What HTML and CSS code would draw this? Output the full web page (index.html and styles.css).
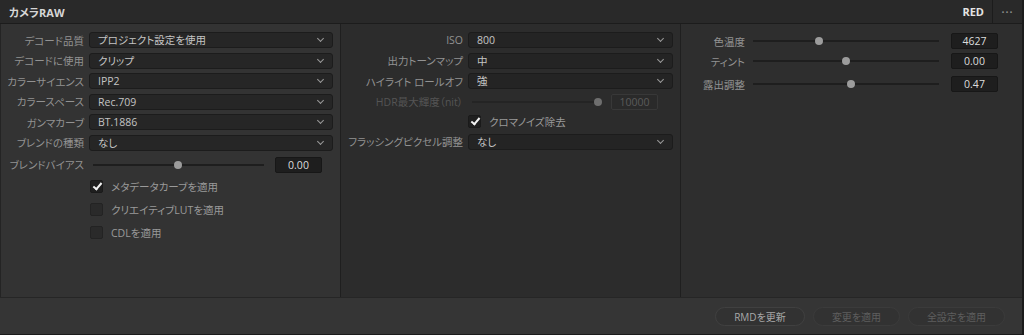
FILE: index.html
```html
<!DOCTYPE html>
<html lang="ja">

<head>
  <meta charset="UTF-8" />
  <meta name="viewport" content="width=device-width, initial-scale=1.0" />
  <title>カメラRAW</title>
  <link rel="stylesheet" href="styles.css">
</head>

<body>
  <div id="raw-panel">
    <div class="panel-header">
      <span class="panel-title">カメラRAW</span>
      <span class="panel-format">RED</span>
      <span class="panel-menu">&bull;&bull;&bull;</span>
    </div>

    <div class="panel-body">
      <!-- 左: デコード設定 -->
      <div class="col col-left">
        <div class="field">
          <label>デコード品質</label>
          <div class="select">プロジェクト設定を使用</div>
        </div>
        <div class="field">
          <label>デコードに使用</label>
          <div class="select">クリップ</div>
        </div>
        <div class="field">
          <label>カラーサイエンス</label>
          <div class="select">IPP2</div>
        </div>
        <div class="field">
          <label>カラースペース</label>
          <div class="select">Rec.709</div>
        </div>
        <div class="field">
          <label>ガンマカーブ</label>
          <div class="select">BT.1886</div>
        </div>
        <div class="field">
          <label>ブレンドの種類</label>
          <div class="select">なし</div>
        </div>
        <div class="field slider-field blend-bias">
          <label>ブレンドバイアス</label>
          <div class="slider-wrap">
            <div class="slider"><span class="thumb" style="left: 49.5%"></span></div>
            <div class="value-box">0.00</div>
          </div>
        </div>
        <div class="check-list">
          <div class="check"><span class="box checked"></span>メタデータカーブを適用</div>
          <div class="check"><span class="box"></span>クリエイティブLUTを適用</div>
          <div class="check"><span class="box"></span>CDLを適用</div>
        </div>
      </div>

      <!-- 中央: トーン -->
      <div class="col col-mid">
        <div class="field">
          <label>ISO</label>
          <div class="select">800</div>
        </div>
        <div class="field">
          <label>出力トーンマップ</label>
          <div class="select">中</div>
        </div>
        <div class="field">
          <label>ハイライト ロールオフ</label>
          <div class="select">強</div>
        </div>
        <div class="field slider-field disabled hdr">
          <label>HDR最大輝度（nit）</label>
          <div class="slider-wrap">
            <div class="slider"><span class="thumb" style="left: 100%"></span></div>
            <div class="value-box">10000</div>
          </div>
        </div>
        <div class="field check-row">
          <span></span>
          <div class="check"><span class="box checked"></span>クロマノイズ除去</div>
        </div>
        <div class="field">
          <label>フラッシングピクセル調整</label>
          <div class="select">なし</div>
        </div>
      </div>

      <!-- 右: カラー -->
      <div class="col col-right">
        <div class="field slider-field">
          <label>色温度</label>
          <div class="slider-wrap">
            <div class="slider"><span class="thumb" style="left: 35.5%"></span></div>
            <div class="value-box">4627</div>
          </div>
        </div>
        <div class="field slider-field">
          <label>ティント</label>
          <div class="slider-wrap">
            <div class="slider"><span class="thumb" style="left: 50%"></span></div>
            <div class="value-box">0.00</div>
          </div>
        </div>
        <div class="field slider-field exposure">
          <label>露出調整</label>
          <div class="slider-wrap">
            <div class="slider"><span class="thumb" style="left: 52.5%"></span></div>
            <div class="value-box">0.47</div>
          </div>
        </div>
      </div>
    </div>

    <div class="panel-footer">
      <button class="pill">RMDを更新</button>
      <button class="pill dim">変更を適用</button>
      <button class="pill dim">全設定を適用</button>
    </div>
  </div>
</body>

</html>
```

FILE: styles.css
```css
body {
  margin: 0;
  padding: 0;
  background-color: #1b1b1b;
  font-family: "Open Sans", "Noto Sans CJK JP", sans-serif;
  font-size: 10.5px;
  font-feature-settings: "palt";
  color: #c0c0c0;
}

#raw-panel {
  width: 1022px;
  height: 334px;
  border-bottom: 1px solid #1b1b1b;
  display: flex;
  flex-direction: column;
}

.panel-header {
  height: 23px;
  border-bottom: 1px solid #1c1c1c;
  background-color: #292929;
  display: flex;
  align-items: center;
}

.panel-title {
  padding-left: 9px;
  font-weight: bold;
  font-size: 11px;
  color: #d6d6d6;
  flex: 1;
}

.panel-format {
  font-weight: bold;
  font-size: 11px;
  color: #e4e4e4;
  padding-right: 8px;
  height: 23px;
  line-height: 23px;
  border-right: 1px solid #1c1c1c;
}

.panel-menu {
  width: 29px;
  text-align: center;
  font-size: 8px;
  letter-spacing: 1px;
  color: #8a8a8a;
}

.panel-body {
  height: 273px;
  display: grid;
  grid-template-columns: 340px 340px 1fr;
  border-left: 1px solid #242424;
}

.col {
  padding-top: 8px;
  display: flex;
  flex-direction: column;
  gap: 4.6px;
}

.col-left {
  background-color: #333333;
  border-right: 1px solid #1f1f1f;
  padding-right: 7px;
}

.col-mid {
  background-color: #2c2c2c;
  border-right: 1px solid #1f1f1f;
  padding-right: 7px;
}

.col-right {
  background-color: #2e2e2e;
  padding-top: 9px;
  gap: 4px;
}

.field {
  display: grid;
  grid-template-columns: 83px 1fr;
  column-gap: 5px;
  align-items: center;
  height: 16px;
}

.col-mid .field {
  grid-template-columns: 122px 1fr;
}

.col-right .field {
  grid-template-columns: 64px 1fr;
  column-gap: 8px;
}

.field label {
  text-align: right;
  color: #929292;
  white-space: nowrap;
}

.select {
  height: 14px;
  line-height: 14px;
  padding-left: 8px;
  background-color: #262626;
  border: 1px solid #1c1c1c;
  border-radius: 3px;
  color: #c4c4c4;
  position: relative;
}

.col-mid .select {
  background-color: #242424;
}

.select::after {
  content: "";
  position: absolute;
  right: 9px;
  top: 3px;
  width: 4px;
  height: 4px;
  border-right: 1.5px solid #9a9a9a;
  border-bottom: 1.5px solid #9a9a9a;
  transform: rotate(45deg);
}

.slider-wrap {
  display: flex;
  align-items: center;
}

.slider {
  flex: 1;
  height: 2px;
  background-color: #1e1e1e;
  position: relative;
  margin-left: 4px;
}

.thumb {
  position: absolute;
  top: -3px;
  width: 8px;
  height: 8px;
  margin-left: -4px;
  border-radius: 50%;
  background-color: #9c9c9c;
}

.value-box {
  width: 45px;
  height: 14px;
  line-height: 14px;
  text-align: center;
  background-color: #1e1e1e;
  border: 1px solid #171717;
  border-radius: 2px;
  color: #dcdcdc;
  margin-left: 11px;
}

.blend-bias {
  margin-top: 1px;
}

.blend-bias .slider-wrap {
  margin-right: 11px;
}

.hdr .slider-wrap {
  margin-right: 15px;
}

.hdr .value-box {
  margin-left: 13px;
}

.disabled label {
  color: #555555;
}

.disabled .slider {
  background-color: #242424;
}

.disabled .thumb {
  background-color: #6e6e6e;
}

.disabled .value-box {
  background-color: #2a2a2a;
  border-color: #383838;
  color: #5a5a5a;
}

.col-right .slider {
  margin-left: 0;
}

.col-right .value-box {
  margin-left: 12px;
  margin-right: 24px;
}

.exposure {
  margin-top: 3px;
}

.check-list {
  padding-left: 89px;
  padding-top: 3px;
  display: flex;
  flex-direction: column;
  gap: 11px;
}

.check {
  display: flex;
  align-items: center;
  height: 12px;
  color: #9a9a9a;
}

.box {
  width: 11px;
  height: 11px;
  margin-right: 8px;
  background-color: #2a2a2a;
  border: 1px solid #232323;
  border-radius: 2px;
  position: relative;
}

.box.checked {
  background-color: #1f1f1f;
  border-color: #1a1a1a;
}

.box.checked::after {
  content: "";
  position: absolute;
  left: 3.5px;
  top: 0px;
  width: 3px;
  height: 7px;
  border-right: 2px solid #f2f2f2;
  border-bottom: 2px solid #f2f2f2;
  transform: rotate(40deg);
}

.check-row {
  height: 12px;
  margin-top: 1px;
  margin-bottom: 2px;
}

.panel-footer {
  flex: 1;
  border-top: 1px solid #262626;
  background-color: #353535;
  display: flex;
  justify-content: flex-end;
  align-items: center;
  gap: 8px;
  padding-right: 17px;
}

.pill {
  height: 19px;
  padding: 0;
  border: 1px solid #404040;
  border-radius: 10px;
  background-color: #323232;
  font-family: "Open Sans", "Noto Sans CJK JP", sans-serif;
  font-feature-settings: "palt";
  font-size: 10px;
  color: #a8a8a8;
  width: 90px;
}

.pill.dim {
  color: #5e5e5e;
  border-color: #3b3b3b;
  width: 87px;
}

.pill.dim:last-child {
  width: 97px;
}
```
